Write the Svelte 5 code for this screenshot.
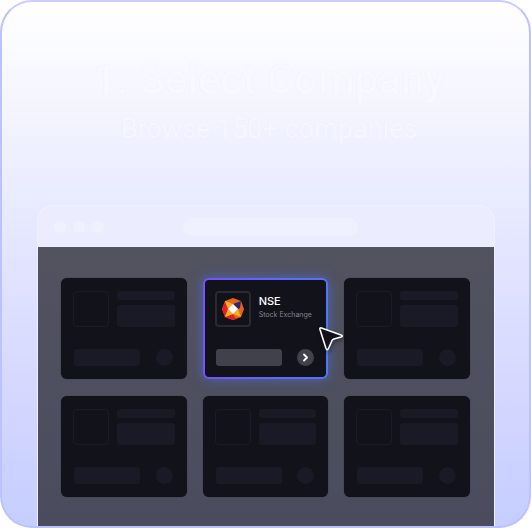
<script lang="ts">
  type Company = { name: string; sector: string } | null;

  const companies: Company[] = [
    null,
    { name: 'NSE', sector: 'Stock Exchange' },
    null,
    null,
    null,
    null
  ];
</script>

<section class="step">
  <header>
    <h2>1. Select Company</h2>
    <p>Browse 150+ companies</p>
  </header>

  <div class="window">
    <div class="toolbar">
      <div class="dots"><i></i><i></i><i></i></div>
      <div class="address"></div>
    </div>

    <div class="grid">
      {#each companies as company}
        <article class="card" class:active={company}>
          <div class="top">
            <div class="thumb">
              {#if company}
                <svg width="24" height="24" viewBox="0 0 24 24" aria-hidden="true">
                  <path d="M12 1 20 4 23 12 20 20 12 23 4 20 1 12 4 4Z" fill="#e8641b" />
                  <path d="M1 12 4 5 7 12 4 20Z" fill="#e31e26" />
                  <path d="M4 20 12 17 15 22 12 23Z" fill="#e31e26" />
                  <path d="M4 4 12 7 7 12Z" fill="#f6b21b" />
                  <path d="M4 20 7 12 12 17Z" fill="#f6b21b" />
                  <path d="M20 20 17 12 12 17Z" fill="#f6b21b" />
                  <path d="M20 4 19 11 17 12 12 7Z" fill="#2b2a6f" />
                  <path d="M12 7 17 12 12 17 7 12Z" fill="#fff" />
                </svg>
              {/if}
            </div>
            {#if company}
              <div class="info">
                <h3>{company.name}</h3>
                <span>{company.sector}</span>
              </div>
            {:else}
              <div class="lines">
                <div class="line"></div>
                <div class="line tall"></div>
              </div>
            {/if}
          </div>
          <div class="bottom">
            <div class="bar"></div>
            {#if company}
              <button class="go" aria-label="Open {company.name}">
                <svg width="17" height="17" viewBox="0 0 17 17" fill="none">
                  <path d="M7 5.5 10 8.5 7 11.5" stroke="#fff" stroke-width="1.8" stroke-linecap="round" stroke-linejoin="round" />
                </svg>
              </button>
            {:else}
              <div class="go"></div>
            {/if}
          </div>
          {#if company}
            <svg class="cursor" width="28" height="28" viewBox="0 0 28 28" aria-hidden="true">
              <path d="M3.5 2 Q1.5 1.3 2 3.5 L8 22.5 Q9 25 10.5 22.5 L14 14.5 Q14.5 13.5 16 13 L23 11 Q25.5 10 23 9Z" fill="#12121a" stroke="#fff" stroke-width="1.6" stroke-linejoin="round" />
            </svg>
          {/if}
        </article>
      {/each}
    </div>
  </div>
</section>

<style>
  :global(body) {
    background: #fff;
  }
  .step {
    box-sizing: border-box;
    height: 100vh;
    padding: 0 34px 0 35px;
    display: flex;
    flex-direction: column;
    overflow: hidden;
    border: 2px solid #bcc1ff;
    border-top-color: #c9ceff;
    border-radius: 32px;
    background: linear-gradient(#fff 0%, #f5f6ff 18%, #e7e9ff 41%, #d6d8ff 72%, #c5ceff 100%);
    font-family: Inter, "Liberation Sans", sans-serif;
  }
  header {
    height: 203px;
    flex: none;
    padding-left: 6px;
    text-align: center;
    white-space: nowrap;
    font-family: Roboto, "Liberation Sans", sans-serif;
    text-shadow: 0 0 1px #e9ebfa;
  }
  h2 {
    margin: 0;
    padding-top: 54px;
    font-size: 42px;
    line-height: 48px;
    font-weight: 500;
    color: #f8f9ff;
  }
  p {
    margin: 0;
    padding-top: 7px;
    font-size: 27px;
    line-height: 36px;
    color: #f5f6ff;
  }
  .window {
    flex: 1;
    display: flex;
    flex-direction: column;
    border: 1px solid #eff0ff;
    border-bottom: none;
    border-radius: 16px 16px 0 0;
    background: #ebedff;
  }
  .toolbar {
    height: 41px;
    display: grid;
    grid-template-columns: 1fr 175px 1fr;
    align-items: center;
    flex: none;
    padding-left: 8px;
  }
  .dots {
    display: flex;
    gap: 7px;
    padding-left: 8px;
  }
  .dots i {
    width: 12px;
    height: 12px;
    border-radius: 50%;
    background: #eff1ff;
  }
  .address {
    height: 18px;
    border-radius: 9px;
    background: #f0f1ff;
  }
  .grid {
    flex: 1;
    display: grid;
    grid-template-columns: repeat(3, 1fr);
    align-content: start;
    gap: 17px 16px;
    padding: 31px 24px 31px 23px;
    background: linear-gradient(#52535f, #4a4c5e);
  }
  .card {
    position: relative;
    box-sizing: border-box;
    height: 101px;
    padding: 13px 12px 13px;
    display: flex;
    flex-direction: column;
    justify-content: space-between;
    border-radius: 6px;
    background: #12121a;
    box-shadow: 0 0 1px #20202a;
  }
  .active {
    border: 2px solid transparent;
    padding: 11px 10px 11px;
    background:
      linear-gradient(#12121a, #12121a) padding-box,
      linear-gradient(90deg, #7652ff, #4e76ff) border-box;
    box-shadow: 0 0 12px rgba(78, 112, 240, 0.6);
  }
  .top {
    display: flex;
    gap: 8px;
  }
  .thumb {
    box-sizing: border-box;
    width: 36px;
    height: 36px;
    display: flex;
    align-items: center;
    justify-content: center;
    border: 1px solid #1b1b26;
    border-radius: 4px;
    flex: none;
  }
  .active .thumb {
    border: 2px solid #292932;
  }
  .lines {
    flex: 1;
    display: flex;
    flex-direction: column;
    gap: 5px;
  }
  .line {
    height: 9px;
    border-radius: 3px;
    background: #191a25;
  }
  .tall {
    height: 22px;
  }
  .info {
    display: flex;
    flex-direction: column;
    gap: 2px;
    padding-top: 3px;
    white-space: nowrap;
  }
  h3 {
    margin: 0;
    font-size: 11px;
    line-height: 14px;
    font-weight: 500;
    color: #fff;
  }
  .info span {
    font-size: 7px;
    line-height: 10px;
    color: #85858f;
  }
  .bottom {
    display: flex;
    justify-content: space-between;
    padding: 0 2px 0 1px;
  }
  .bar {
    width: 66px;
    height: 17px;
    border-radius: 3px;
    background: #191a26;
  }
  .go {
    width: 17px;
    height: 17px;
    padding: 0;
    display: flex;
    align-items: center;
    justify-content: center;
    border: none;
    border-radius: 50%;
    background: #191a25;
  }
  .active .bar,
  .active .go {
    background: #41414b;
  }
  .cursor {
    position: absolute;
    right: -20px;
    top: 46px;
    z-index: 1;
    filter: drop-shadow(1px 2px 2px rgba(0, 0, 0, 0.4));
  }
</style>
